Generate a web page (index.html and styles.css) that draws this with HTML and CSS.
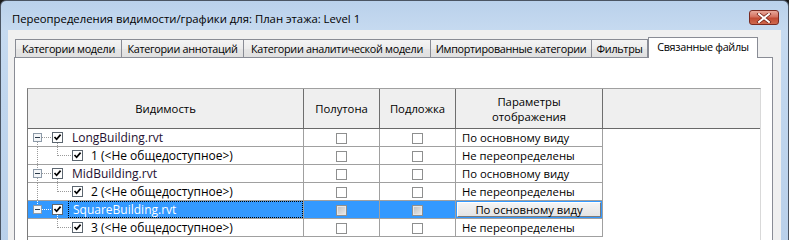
FILE: index.html
```html
<!DOCTYPE html>
<html lang="ru">
<head>
<meta charset="utf-8">
<title>Переопределения видимости/графики</title>
<link rel="stylesheet" href="styles.css">
</head>
<body>
<div class="window">
  <div class="titlebar">
    <span class="title">Переопределения видимости/графики для: План этажа: Level 1</span>
    <div class="close">
      <svg width="16" height="10" viewBox="0 0 16 10"><path d="M3 1 L13 9 M13 1 L3 9" stroke="#6b1a10" stroke-width="3.4" stroke-linecap="square"/><path d="M3 1 L13 9 M13 1 L3 9" stroke="#ffffff" stroke-width="2" stroke-linecap="square"/></svg>
    </div>
  </div>
  <div class="client">
    <div class="tabs">
      <div class="tab w1">Категории модели</div>
      <div class="tab w2">Категории аннотаций</div>
      <div class="tab w3">Категории аналитической модели</div>
      <div class="tab w4">Импортированные категории</div>
      <div class="tab w5">Фильтры</div>
      <div class="tab active">Связанные файлы</div>
    </div>
    <div class="panel">
      <div class="grid">
        <div class="hrow">
          <div class="hcell">Видимость</div>
          <div class="hcell">Полутона</div>
          <div class="hcell">Подложка</div>
          <div class="hcell">Параметры<br>отображения</div>
          <div class="hcell last"></div>
        </div>

        <div class="row">
          <div class="cell tree">
            <svg class="gutter" width="40" height="17" viewBox="0 0 40 17">
              <line x1="9.5" y1="13" x2="9.5" y2="17" class="dot"/>
              <line x1="29.5" y1="14" x2="29.5" y2="17" class="dot"/>
              <line x1="14" y1="8.5" x2="24" y2="8.5" class="dot"/>
              <rect x="5.5" y="4.5" width="8" height="8" class="exp"/>
              <line x1="7" y1="8.5" x2="12" y2="8.5" class="minus"/>
              <rect x="24.5" y="3.5" width="10" height="10" class="cb"/>
              <path d="M26.5 8 L28.6 10.3 L32.6 5.6" class="tick"/>
            </svg>
            <span class="label file">LongBuilding.rvt</span>
          </div>
          <div class="cell mid"><span class="box"></span></div>
          <div class="cell mid"><span class="box"></span></div>
          <div class="cell param">По основному виду</div>
          <div class="cell empty"></div>
        </div>

        <div class="row">
          <div class="cell tree">
            <svg class="gutter" width="59" height="17" viewBox="0 0 59 17">
              <line x1="9.5" y1="0" x2="9.5" y2="17" class="dot"/>
              <line x1="29.5" y1="0" x2="29.5" y2="9" class="dot"/>
              <line x1="30" y1="8.5" x2="44" y2="8.5" class="dot"/>
              <rect x="44.5" y="3.5" width="10" height="10" class="cb"/>
              <path d="M46.5 8 L48.6 10.3 L52.6 5.6" class="tick"/>
            </svg>
            <span class="label">1 (&lt;Не общедоступное&gt;)</span>
          </div>
          <div class="cell mid"><span class="box"></span></div>
          <div class="cell mid"><span class="box"></span></div>
          <div class="cell param">Не переопределены</div>
          <div class="cell empty"></div>
        </div>

        <div class="row">
          <div class="cell tree">
            <svg class="gutter" width="40" height="17" viewBox="0 0 40 17">
              <line x1="9.5" y1="0" x2="9.5" y2="4" class="dot"/>
              <line x1="9.5" y1="13" x2="9.5" y2="17" class="dot"/>
              <line x1="29.5" y1="14" x2="29.5" y2="17" class="dot"/>
              <line x1="14" y1="8.5" x2="24" y2="8.5" class="dot"/>
              <rect x="5.5" y="4.5" width="8" height="8" class="exp"/>
              <line x1="7" y1="8.5" x2="12" y2="8.5" class="minus"/>
              <rect x="24.5" y="3.5" width="10" height="10" class="cb"/>
              <path d="M26.5 8 L28.6 10.3 L32.6 5.6" class="tick"/>
            </svg>
            <span class="label file">MidBuilding.rvt</span>
          </div>
          <div class="cell mid"><span class="box"></span></div>
          <div class="cell mid"><span class="box"></span></div>
          <div class="cell param">По основному виду</div>
          <div class="cell empty"></div>
        </div>

        <div class="row">
          <div class="cell tree">
            <svg class="gutter" width="59" height="17" viewBox="0 0 59 17">
              <line x1="9.5" y1="0" x2="9.5" y2="17" class="dot"/>
              <line x1="29.5" y1="0" x2="29.5" y2="9" class="dot"/>
              <line x1="30" y1="8.5" x2="44" y2="8.5" class="dot"/>
              <rect x="44.5" y="3.5" width="10" height="10" class="cb"/>
              <path d="M46.5 8 L48.6 10.3 L52.6 5.6" class="tick"/>
            </svg>
            <span class="label">2 (&lt;Не общедоступное&gt;)</span>
          </div>
          <div class="cell mid"><span class="box"></span></div>
          <div class="cell mid"><span class="box"></span></div>
          <div class="cell param">Не переопределены</div>
          <div class="cell empty"></div>
        </div>

        <div class="row selected">
          <div class="cell tree">
            <svg class="gutter" width="40" height="17" viewBox="0 0 40 17">
              <line x1="9.5" y1="0" x2="9.5" y2="4" class="dot"/>
              <line x1="29.5" y1="14" x2="29.5" y2="17" class="dot"/>
              <line x1="14" y1="8.5" x2="24" y2="8.5" class="dot"/>
              <rect x="5.5" y="4.5" width="8" height="8" class="exp"/>
              <line x1="7" y1="8.5" x2="12" y2="8.5" class="minus"/>
              <rect x="24.5" y="3.5" width="10" height="10" class="cb"/>
              <path d="M26.5 8 L28.6 10.3 L32.6 5.6" class="tick"/>
            </svg>
            <span class="label file focus">SquareBuilding.rvt</span>
          </div>
          <div class="cell mid"><span class="box dis"></span></div>
          <div class="cell mid"><span class="box dis"></span></div>
          <div class="cell param"><span class="btn">По основному виду</span></div>
          <div class="cell empty"></div>
        </div>

        <div class="row">
          <div class="cell tree">
            <svg class="gutter" width="59" height="17" viewBox="0 0 59 17">
              <line x1="29.5" y1="0" x2="29.5" y2="9" class="dot"/>
              <line x1="30" y1="8.5" x2="44" y2="8.5" class="dot"/>
              <rect x="44.5" y="3.5" width="10" height="10" class="cb"/>
              <path d="M46.5 8 L48.6 10.3 L52.6 5.6" class="tick"/>
            </svg>
            <span class="label">3 (&lt;Не общедоступное&gt;)</span>
          </div>
          <div class="cell mid"><span class="box"></span></div>
          <div class="cell mid"><span class="box"></span></div>
          <div class="cell param">Не переопределены</div>
          <div class="cell empty"></div>
        </div>
      </div>
    </div>
  </div>
</div>
</body>
</html>
```

FILE: styles.css
```css
* { box-sizing: border-box; }

html, body {
  margin: 0;
  padding: 0;
}

body {
  width: 789px;
  height: 240px;
  overflow: hidden;
  background: #1b1b1b;
  font-family: "Open Sans", "Noto Sans", "DejaVu Sans", sans-serif;
  font-size: 11.3px;
  color: #000;
}

.window {
  width: 789px;
  height: 250px;
  border: 1px solid #4b5563;
  border-radius: 6px 6px 0 0;
  background: linear-gradient(#bad1eb, #c6daf0 30px, #c0d6ee 100px, #b9d0ea);
  display: flex;
  flex-direction: column;
}

.titlebar {
  height: 29px;
  flex: none;
  display: flex;
  align-items: flex-start;
  padding-left: 11px;
}

.title {
  margin-top: 10px;
  line-height: 16px;
  white-space: nowrap;
}

.close {
  margin-left: auto;
  margin-right: 9px;
  margin-top: 9px;
  width: 30px;
  height: 15px;
  border: 1px solid #7a2b22;
  border-radius: 3px;
  background: linear-gradient(#e9a99b, #d4715f 45%, #c14a33 55%, #cf6a4f);
  display: flex;
  align-items: center;
  justify-content: center;
}

.client {
  flex: 1;
  margin: 0 7px 0 7px;
  background: #f0f0f0;
  padding: 7px 8px 0 6px;
  display: flex;
  flex-direction: column;
}

.tabs {
  display: flex;
  align-items: flex-end;
  height: 20px;
  padding-left: 1px;
}

.tab {
  height: 18px;
  border: 1px solid #898c95;
  border-bottom: none;
  background: linear-gradient(#f4f4f4, #ececec 50%, #e6e6e6 51%, #e0e0e0);
  margin-left: -1px;
  text-align: center;
  line-height: 17px;
  white-space: nowrap;
  overflow: hidden;
  font-size: 10.8px;
  letter-spacing: -0.3px;
}

.tab.w1 { width: 107px; margin-left: 0; }
.tab.w2 { width: 123px; }
.tab.w3 { width: 188px; }
.tab.w4 { width: 162px; }
.tab.w5 { width: 57px; }

.tab.active {
  width: 110px;
  height: 21px;
  margin-left: 0;
  margin-bottom: -1px;
  background: #fff;
  position: relative;
  z-index: 1;
  line-height: 17px;
}

.panel {
  flex: 1;
  border: 1px solid #898c95;
  background: #fff;
  padding: 30px 0 0 12px;
}

.grid {
  width: 734px;
  height: 160px;
  border-left: 1px solid #7a7a7a;
  border-right: 1px solid #d9d9d9;
  border-top: 1px solid #a0a0a0;
}

.hrow {
  display: grid;
  grid-template-columns: 276px 76px 76px 147px 157px;
  height: 40px;
  background: #efefef;
  border-bottom: 1px solid #696969;
}

.hcell {
  border-right: 1px solid #6e6e6e;
  display: flex;
  align-items: center;
  justify-content: center;
  text-align: center;
  line-height: 15px;
}

.hcell.last { border-right: none; }

.row {
  display: grid;
  grid-template-columns: 276px 76px 76px 147px 157px;
  height: 18px;
}

.cell {
  border-right: 1px solid #a0a0a0;
  border-bottom: 1px solid #a0a0a0;
  display: flex;
  align-items: center;
  white-space: nowrap;
  line-height: 17px;
}

.cell.empty {
  border: none;
}

.cell.mid {
  justify-content: center;
}

.cell.param {
  padding-left: 6px;
}

.tree {
  align-items: stretch;
}

.gutter {
  flex: none;
  display: block;
}

.gutter .dot {
  stroke: #9a9a9a;
  stroke-width: 1;
  stroke-dasharray: 1 1;
  shape-rendering: crispEdges;
}

.gutter .exp {
  fill: #f4f6f8;
  stroke: #8d9aa8;
  stroke-width: 1;
  shape-rendering: crispEdges;
}

.gutter .minus {
  stroke: #2b3a4a;
  stroke-width: 1;
  shape-rendering: crispEdges;
}

.gutter .cb {
  fill: #fff;
  stroke: #5c6670;
  stroke-width: 1;
  shape-rendering: crispEdges;
}

.gutter .tick {
  fill: none;
  stroke: #000;
  stroke-width: 1.7;
}

.label {
  padding-left: 4px;
  flex: 1;
  line-height: 17px;
  font-size: 12px;
}

.label.file {
  color: #241030;
}

.box {
  width: 11px;
  height: 11px;
  border: 1px solid #8e8f8f;
  background: #fff;
  margin-top: 1px;
}

.box.dis {
  background: linear-gradient(135deg, #bdbdbd, #ececec);
  box-shadow: inset 0 0 0 1px #e6e6e6;
}

.row.selected .cell:not(.empty) {
  background: #3399ff;
}

.row.selected .label {
  color: #fff;
  border: 1px dotted #000;
  line-height: 15px;
}

.row.selected .gutter .dot {
  stroke: #ffffff;
}

.cell.param .btn {
  display: block;
  width: 144px;
  height: 15px;
  margin-left: -5px;
  border: 1px solid;
  border-color: #ffffff #7a7a7a #7a7a7a #ffffff;
  background: linear-gradient(#f4f4f4, #e4e4e4);
  text-align: center;
  line-height: 13px;
  color: #000;
}
```
